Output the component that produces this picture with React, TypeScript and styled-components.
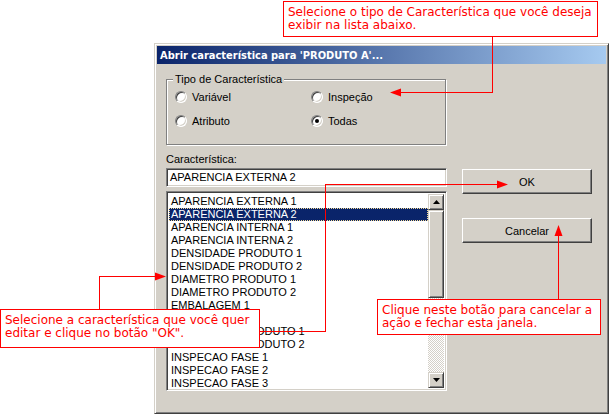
import React from "react";
import styled, { createGlobalStyle } from "styled-components";

const GlobalStyle = createGlobalStyle`
  html, body { margin: 0; padding: 0; background: #ffffff; }
  body { font-family: "Liberation Sans", Arial, sans-serif; }
  * { box-sizing: border-box; }
`;

const Page = styled.div`
  position: relative;
  width: 609px;
  height: 414px;
  overflow: hidden;
  background: #ffffff;
`;

const Dialog = styled.div`
  position: absolute;
  left: 154px;
  top: 43px;
  width: 455px;
  height: 371px;
  display: flex;
  flex-direction: column;
  background: #d4d0c8;
  border: 1px solid;
  border-color: #d4d0c8 #404040 #404040 #d4d0c8;
  box-shadow: inset 1px 1px 0 #ffffff, inset -1px -1px 0 #808080;
  padding: 2px;
`;

const TitleBar = styled.div`
  height: 18px;
  display: flex;
  align-items: center;
  padding-left: 3px;
  background: linear-gradient(to right, #0a246a, #a6caf0);
  color: #ffffff;
  font-family: "DejaVu Sans Condensed", "DejaVu Sans", sans-serif;
  font-stretch: condensed;
  font-weight: bold;
  font-size: 11px;
  white-space: nowrap;
`;

const Body = styled.div`
  display: flex;
  gap: 15px;
  padding: 15px 14px 0 9px;
  font-family: "Liberation Sans", Arial, sans-serif;
  font-size: 11px;
  color: #000000;
`;

const LeftCol = styled.div`
  width: 281px;
  display: flex;
  flex-direction: column;
`;

const RightCol = styled.div`
  width: 130px;
  display: flex;
  flex-direction: column;
  gap: 24px;
  padding-top: 90px;
`;

const GroupBox = styled.div`
  position: relative;
  width: 280px;
  height: 66px;
  border: 1px solid #808080;
  box-shadow: inset 1px 1px 0 #ffffff, 1px 1px 0 #ffffff;
  padding: 5px 0 0 8px;
`;

const Legend = styled.span`
  position: absolute;
  top: -7px;
  left: 6px;
  padding: 0 2px;
  line-height: 13px;
  background: #d4d0c8;
`;

const RadioGrid = styled.div`
  display: grid;
  grid-template-columns: 136px 136px;
  grid-auto-rows: 24px;
  align-items: center;
`;

const RadioItem = styled.label`
  display: flex;
  align-items: center;
  gap: 5px;
  line-height: 13px;
`;

const RadioCircle = styled.span<{ $checked?: boolean }>`
  position: relative;
  width: 12px;
  height: 12px;
  border-radius: 50%;
  background: #ffffff;
  border: 1px solid;
  border-color: #808080 #ffffff #ffffff #808080;
  box-shadow: inset 1px 1px 0 #404040, inset -1px -1px 0 #d4d0c8;
  &::after {
    content: "";
    display: ${(p) => (p.$checked ? "block" : "none")};
    position: absolute;
    left: 3px;
    top: 3px;
    width: 4px;
    height: 4px;
    border-radius: 50%;
    background: #000000;
  }
`;

const FieldLabel = styled.div`
  margin-top: 8px;
  line-height: 13px;
`;

const Sunken = styled.div`
  background: #ffffff;
  border: 1px solid;
  border-color: #808080 #ffffff #ffffff #808080;
  box-shadow: inset 1px 1px 0 #404040, inset -1px -1px 0 #d4d0c8;
`;

const TextBox = styled(Sunken)`
  margin-top: 2px;
  height: 19px;
  padding: 2px 0 0 3px;
  line-height: 13px;
`;

const ListBox = styled(Sunken)`
  margin-top: 4px;
  height: 200px;
  padding: 2px;
  display: flex;
`;

const Items = styled.div`
  flex: 1;
  padding-top: 1px;
  overflow: hidden;
`;

const Item = styled.div<{ $selected?: boolean }>`
  height: 13px;
  line-height: 13px;
  padding-left: 2px;
  white-space: nowrap;
  background: ${(p) => (p.$selected ? "#0a246a" : "transparent")};
  color: ${(p) => (p.$selected ? "#ffffff" : "#000000")};
  outline: ${(p) => (p.$selected ? "1px dotted #f5db95" : "none")};
  outline-offset: -1px;
`;

const ScrollBar = styled.div`
  width: 16px;
  display: flex;
  flex-direction: column;
`;

const Raised = styled.div`
  background: #d4d0c8;
  border: 1px solid;
  border-color: #d4d0c8 #404040 #404040 #d4d0c8;
  box-shadow: inset 1px 1px 0 #ffffff, inset -1px -1px 0 #808080;
`;

const ScrollButton = styled(Raised)`
  height: 16px;
  display: flex;
  align-items: center;
  justify-content: center;
`;

const Thumb = styled(Raised)`
  height: 88px;
`;

const Track = styled.div`
  flex: 1;
  background-color: #d4d0c8;
  background-image: conic-gradient(#ffffff 25%, #d4d0c8 0 50%, #ffffff 0 75%, #d4d0c8 0);
  background-size: 2px 2px;
`;

const Button = styled.div`
  height: 25px;
  display: flex;
  align-items: center;
  justify-content: center;
  background: #d4d0c8;
  border: 1px solid;
  border-color: #ffffff #404040 #404040 #ffffff;
  box-shadow: inset -1px -1px 0 #808080;
  font-size: 11px;
`;

const Overlay = styled.svg`
  position: absolute;
  left: 0;
  top: 0;
  pointer-events: none;
`;

const Callout = styled.div<{ $left: number; $top: number; $w: number; $h: number }>`
  position: absolute;
  left: ${(p) => p.$left}px;
  top: ${(p) => p.$top}px;
  width: ${(p) => p.$w}px;
  height: ${(p) => p.$h}px;
  background: #ffffff;
  border: 1px solid #ff0000;
  padding: 4px 4px;
  color: #ff0000;
  font-family: "DejaVu Sans", Verdana, sans-serif;
  font-size: 12px;
  line-height: 13px;
  white-space: nowrap;
  overflow: hidden;
`;

const items = [
  "APARENCIA EXTERNA 1",
  "APARENCIA EXTERNA 2",
  "APARENCIA INTERNA 1",
  "APARENCIA INTERNA 2",
  "DENSIDADE PRODUTO 1",
  "DENSIDADE PRODUTO 2",
  "DIAMETRO PRODUTO 1",
  "DIAMETRO PRODUTO 2",
  "EMBALAGEM 1",
  "EMBALAGEM 2",
  "ESPESSURA PRODUTO 1",
  "ESPESSURA PRODUTO 2",
  "INSPECAO FASE 1",
  "INSPECAO FASE 2",
  "INSPECAO FASE 3",
];

const UpArrow = () => (
  <svg width="7" height="4" viewBox="0 0 7 4">
    <polygon points="3.5,0 7,4 0,4" fill="#000" />
  </svg>
);

const DownArrow = () => (
  <svg width="7" height="4" viewBox="0 0 7 4">
    <polygon points="0,0 7,0 3.5,4" fill="#000" />
  </svg>
);

export default function App() {
  const red = "#ff0000";
  return (
    <Page>
      <GlobalStyle />
      <Dialog>
        <TitleBar>Abrir característica para 'PRODUTO A'...</TitleBar>
        <Body>
          <LeftCol>
            <GroupBox>
              <Legend>Tipo de Característica</Legend>
              <RadioGrid>
                <RadioItem>
                  <RadioCircle />
                  Variável
                </RadioItem>
                <RadioItem>
                  <RadioCircle />
                  Inspeção
                </RadioItem>
                <RadioItem>
                  <RadioCircle />
                  Atributo
                </RadioItem>
                <RadioItem>
                  <RadioCircle $checked />
                  Todas
                </RadioItem>
              </RadioGrid>
            </GroupBox>
            <FieldLabel>Característica:</FieldLabel>
            <TextBox>APARENCIA EXTERNA 2</TextBox>
            <ListBox>
              <Items>
                {items.map((it, i) => (
                  <Item key={it} $selected={i === 1}>
                    {it}
                  </Item>
                ))}
              </Items>
              <ScrollBar>
                <ScrollButton>
                  <UpArrow />
                </ScrollButton>
                <Thumb />
                <Track />
                <ScrollButton>
                  <DownArrow />
                </ScrollButton>
              </ScrollBar>
            </ListBox>
          </LeftCol>
          <RightCol>
            <Button>OK</Button>
            <Button>Cancelar</Button>
          </RightCol>
        </Body>
      </Dialog>

      <Overlay width="609" height="414" viewBox="0 0 609 414" shapeRendering="crispEdges">
        <g stroke={red} strokeWidth="1" fill="none">
          <polyline points="492.5,36 492.5,92.5 400,92.5" />
          <polyline points="99.5,309 99.5,276.5 156,276.5" />
          <polyline points="259,331.5 325.5,331.5 325.5,184.5 498,184.5" />
          <polyline points="558.5,299 558.5,235" />
        </g>
        <g fill={red} shapeRendering="auto">
          <polygon points="390,92.5 401,88.5 401,96.5" />
          <polygon points="166,276.5 155,272.5 155,280.5" />
          <polygon points="508,184.5 497,180.5 497,188.5" />
          <polygon points="558.5,225 554.5,236 562.5,236" />
        </g>
      </Overlay>

      <Callout $left={283} $top={1} $w={315} $h={36}>
        Selecione o tipo de Característica que você deseja
        <br />
        exibir na lista abaixo.
      </Callout>
      <Callout $left={0} $top={309} $w={260} $h={39}>
        Selecione a característica que você quer
        <br />
        editar e clique no botão "OK".
      </Callout>
      <Callout $left={377} $top={299} $w={224} $h={36}>
        Clique neste botão para cancelar a
        <br />
        ação e fechar esta janela.
      </Callout>
    </Page>
  );
}
